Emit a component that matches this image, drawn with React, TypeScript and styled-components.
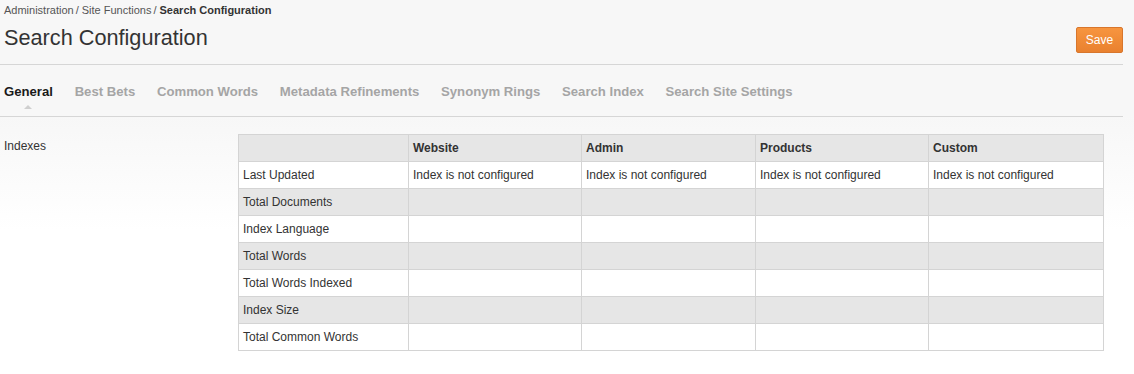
import React from "react";
import styled, { createGlobalStyle } from "styled-components";

const GlobalStyle = createGlobalStyle`
  html, body {
    margin: 0;
    padding: 0;
  }
  body {
    font-family: "Liberation Sans", Arial, sans-serif;
    color: #333;
    background: linear-gradient(#f7f7f7 0, #f7f7f7 116px, #ffffff 230px) no-repeat;
    background-color: #ffffff;
    min-height: 374px;
  }
`;

const Header = styled.header`
  margin-right: 11px;
  border-bottom: 1px solid #d6d6d6;
  padding: 3px 0 11px 4px;
`;

const Breadcrumb = styled.nav`
  font-size: 11px;
  line-height: 14px;
  color: #555;
`;

const Crumb = styled.span<{ $current?: boolean }>`
  color: ${(p) => (p.$current ? "#333" : "#555")};
  font-weight: ${(p) => (p.$current ? "bold" : "normal")};
`;

const Sep = styled.span`
  margin: 0 3px 0 2px;
`;

const TitleRow = styled.div`
  display: flex;
  justify-content: space-between;
  align-items: flex-start;
  margin-top: 8px;
`;

const Title = styled.h1`
  margin: 0;
  font-size: 21.7px;
  line-height: 26px;
  font-weight: normal;
  color: #333;
`;

const SaveButton = styled.button`
  margin-top: 2px;
  width: 47px;
  height: 26px;
  padding: 0;
  border: 1px solid #d8762c;
  border-radius: 2px;
  background: linear-gradient(#f7953f, #e9812f);
  color: #fff;
  font-family: inherit;
  font-size: 12px;
  cursor: pointer;
`;

const Tabs = styled.div`
  margin-right: 11px;
  border-bottom: 1px solid #d6d6d6;
  display: flex;
  align-items: flex-start;
  padding-left: 4px;
  padding-top: 19px;
  box-sizing: border-box;
  height: 52px;
  gap: 21.7px;
`;

const Tab = styled.div<{ $active?: boolean }>`
  position: relative;
  font-size: 13.15px;
  line-height: 16px;
  font-weight: bold;
  color: ${(p) => (p.$active ? "#1a1a1a" : "#a5a5a5")};
  white-space: nowrap;
`;

const Caret = styled.span`
  position: absolute;
  left: 50%;
  top: 21px;
  margin-left: -4px;
  width: 0;
  height: 0;
  border-left: 4px solid transparent;
  border-right: 4px solid transparent;
  border-bottom: 4px solid #cfcfcf;
`;

const Content = styled.section`
  display: grid;
  grid-template-columns: 234px auto;
  padding-left: 4px;
  padding-top: 17px;
`;

const Label = styled.div`
  font-size: 12px;
  line-height: 14px;
  padding-top: 5px;
  color: #333;
`;

const Table = styled.table`
  border-collapse: collapse;
  table-layout: fixed;
  width: 866px;
  font-size: 12px;
  color: #333;
`;

const Row = styled.tr<{ $shade?: boolean }>`
  background: ${(p) => (p.$shade ? "#e6e6e6" : "#ffffff")};
  height: 27px;
`;

const HeadCell = styled.th`
  border: 1px solid #d4d4d4;
  padding: 0 4px;
  height: 26px;
  text-align: left;
  font-weight: bold;
  color: #333;
`;

const Cell = styled.td`
  border: 1px solid #d4d4d4;
  padding: 0 4px;
  height: 26px;
  white-space: nowrap;
`;

const columns = ["Website", "Admin", "Products", "Custom"];
const colWidths = [170, 173, 174, 173, 175];
const rows = [
  "Last Updated",
  "Total Documents",
  "Index Language",
  "Total Words",
  "Total Words Indexed",
  "Index Size",
  "Total Common Words",
];
const tabs = [
  "General",
  "Best Bets",
  "Common Words",
  "Metadata Refinements",
  "Synonym Rings",
  "Search Index",
  "Search Site Settings",
];

export default function App() {
  return (
    <>
      <GlobalStyle />
      <Header>
        <Breadcrumb>
          <Crumb>Administration</Crumb>
          <Sep>/</Sep>
          <Crumb>Site Functions</Crumb>
          <Sep>/</Sep>
          <Crumb $current>Search Configuration</Crumb>
        </Breadcrumb>
        <TitleRow>
          <Title>Search Configuration</Title>
          <SaveButton>Save</SaveButton>
        </TitleRow>
      </Header>
      <Tabs>
        {tabs.map((t, i) => (
          <Tab key={t} $active={i === 0}>
            {t}
            {i === 0 && <Caret />}
          </Tab>
        ))}
      </Tabs>
      <Content>
        <Label>Indexes</Label>
        <Table>
          <colgroup>
            {colWidths.map((w, i) => (
              <col key={i} style={{ width: w }} />
            ))}
          </colgroup>
          <thead>
            <Row $shade>
              <HeadCell />
              {columns.map((c) => (
                <HeadCell key={c}>{c}</HeadCell>
              ))}
            </Row>
          </thead>
          <tbody>
            {rows.map((r, i) => (
              <Row key={r} $shade={i % 2 === 1}>
                <Cell>{r}</Cell>
                {columns.map((c) => (
                  <Cell key={c}>{i === 0 ? "Index is not configured" : ""}</Cell>
                ))}
              </Row>
            ))}
          </tbody>
        </Table>
      </Content>
    </>
  );
}
